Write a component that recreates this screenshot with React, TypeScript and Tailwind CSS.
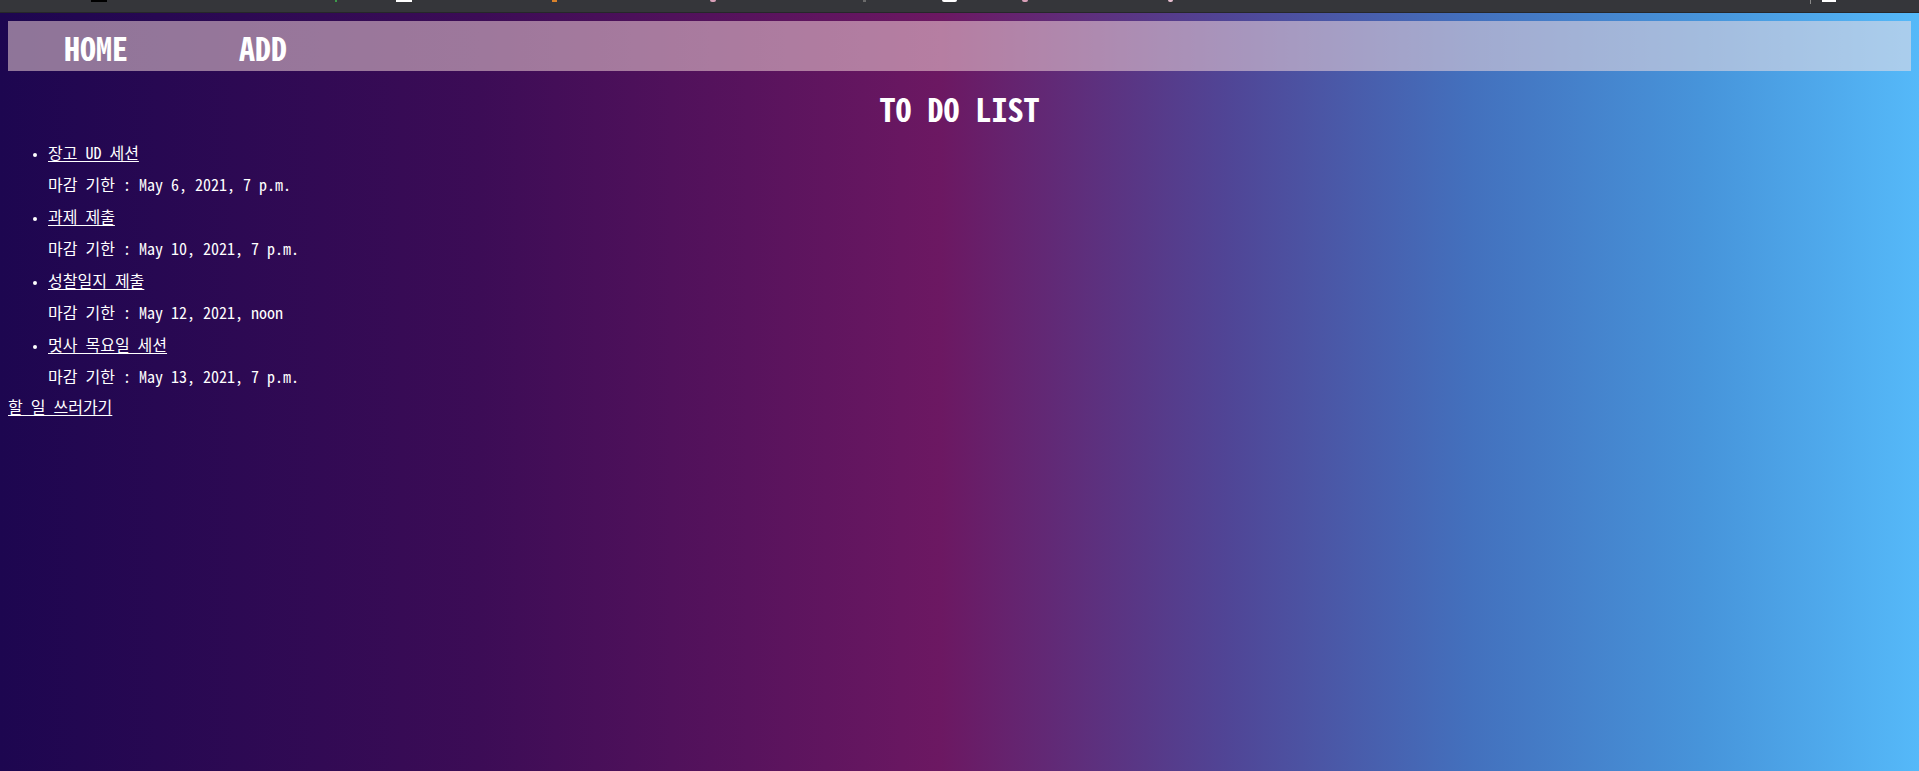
import React from "react";

const todos = [
  { title: "장고 UD 세션", due: "May 6, 2021, 7 p.m." },
  { title: "과제 제출", due: "May 10, 2021, 7 p.m." },
  { title: "성찰일지 제출", due: "May 12, 2021, noon" },
  { title: "멋사 목요일 세션", due: "May 13, 2021, 7 p.m." },
];

const mono = "font-['Noto_Sans_Mono_CJK_KR','Noto_Sans_CJK_KR','DejaVu_Sans_Mono',monospace]";

export default function App() {
  return (
    <div className={`min-h-[771px] w-full text-white ${mono}`}>
      {/* browser chrome strip */}
      <div className="flex h-[13px] items-start border-b border-[#26272a] bg-[#35363a]">
        <span className="ml-[91px] h-[2px] w-[16px] bg-black" />
        <span className="ml-[228px] h-[2px] w-[2px] bg-[#3c9a4a]" />
        <span className="ml-[59px] h-[2px] w-[16px] bg-white" />
        <span className="ml-[140px] h-[2px] w-[5px] bg-[#d9822b]" />
        <span className="ml-[153px] h-[2px] w-[6px] rounded-b bg-[#d9a0b8]" />
        <span className="ml-[147px] h-[2px] w-[3px] bg-[#6b6b6b]" />
        <span className="ml-[76px] h-[2px] w-[15px] rounded-b bg-white" />
        <span className="ml-[65px] h-[2px] w-[6px] rounded-b bg-[#d9a0b8]" />
        <span className="ml-[140px] h-[2px] w-[5px] rounded-b bg-[#e8c0d0]" />
        <span className="ml-[637px] h-[4px] w-[1px] bg-[#8a8a8a]" />
        <span className="ml-[11px] h-[2px] w-[14px] bg-white" />
      </div>

      <div className="min-h-[758px] bg-[linear-gradient(to_right,#1d0650_0%,#3c0c56_25%,#6c1862_49%,#504596_64%,#4370bd_76.5%,#4795db_89%,#55b9f9_100%)] p-2">
        <nav className="flex h-[50px] items-center bg-[#ffe4e1]/50 pt-[2px]">
          <a className="ml-[56px] text-[32px] leading-[40px] font-bold">HOME</a>
          <a className="ml-[111px] text-[32px] leading-[40px] font-bold">ADD</a>
        </nav>

        <h1 className="mt-[17px] text-center text-[32px] leading-[40px] font-bold">TO DO LIST</h1>

        <ul className="mt-[15px] list-disc pl-[40px] text-[16px] leading-[19px] marker:text-[11px]">
          {todos.map((t) => (
            <li key={t.title}>
              <a className="underline underline-offset-2">{t.title}</a>
              <p className="my-[13px]">마감 기한 : {t.due}</p>
            </li>
          ))}
        </ul>
        <a className="-mt-[2px] block w-fit text-[16px] leading-[19px] underline underline-offset-2">할 일 쓰러가기</a>
      </div>
    </div>
  );
}
